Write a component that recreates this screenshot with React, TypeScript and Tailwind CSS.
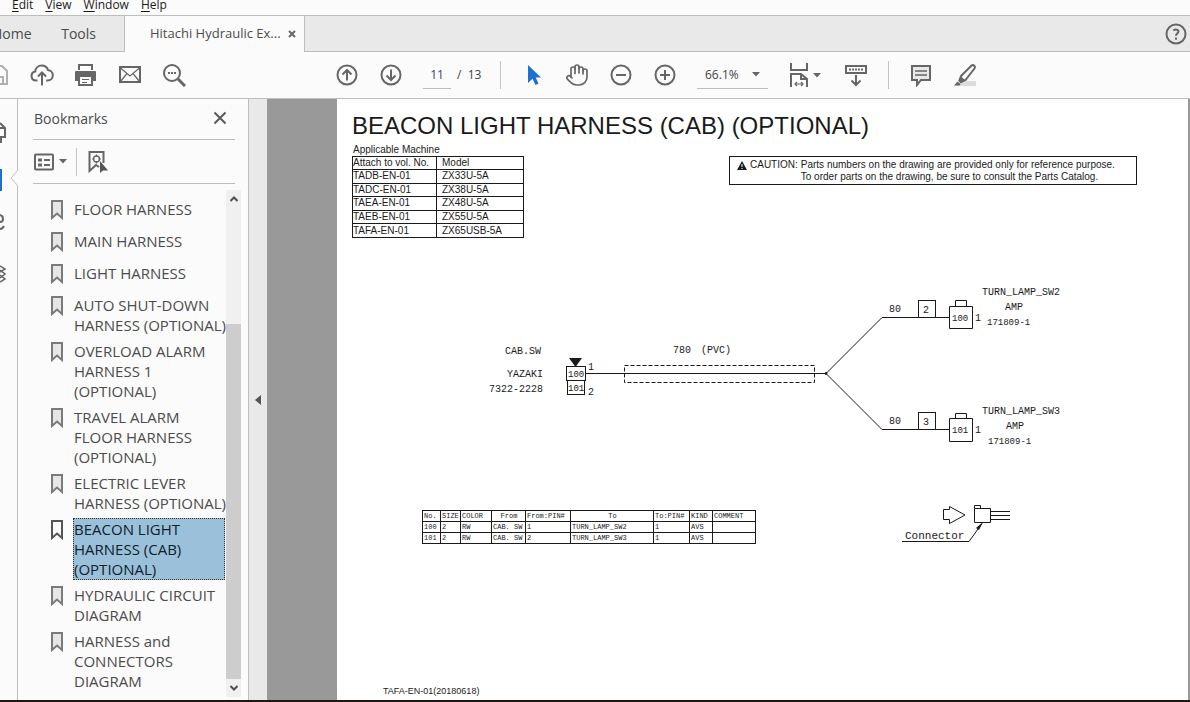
import type { ReactNode } from 'react';
import { Hand } from 'lucide-react';

const menus = ['Edit', 'View', 'Window', 'Help'];

const bookmarks = [
  { title: 'FLOOR HARNESS' },
  { title: 'MAIN HARNESS' },
  { title: 'LIGHT HARNESS' },
  { title: 'AUTO SHUT-DOWN\nHARNESS (OPTIONAL)' },
  { title: 'OVERLOAD ALARM\nHARNESS 1\n(OPTIONAL)' },
  { title: 'TRAVEL ALARM\nFLOOR HARNESS\n(OPTIONAL)' },
  { title: 'ELECTRIC LEVER\nHARNESS (OPTIONAL)' },
  { title: 'BEACON LIGHT\nHARNESS (CAB)\n(OPTIONAL)', active: true },
  { title: 'HYDRAULIC CIRCUIT\nDIAGRAM' },
  { title: 'HARNESS and\nCONNECTORS\nDIAGRAM' },
];

const machines = [
  ['TADB-EN-01', 'ZX33U-5A'],
  ['TADC-EN-01', 'ZX38U-5A'],
  ['TAEA-EN-01', 'ZX48U-5A'],
  ['TAEB-EN-01', 'ZX55U-5A'],
  ['TAFA-EN-01', 'ZX65USB-5A'],
];

const wireColumns = [
  { label: 'No.', className: 'w-[18px] text-left' },
  { label: 'SIZE', className: 'w-[20px] text-left' },
  { label: 'COLOR', className: 'w-[31px] text-left' },
  { label: 'From', className: 'w-[34px] text-center' },
  { label: 'From:PIN#', className: 'w-[45px] text-left' },
  { label: 'To', className: 'w-[83px] text-center' },
  { label: 'To:PIN#', className: 'w-[36px] text-left' },
  { label: 'KIND', className: 'w-[23px] text-left' },
  { label: 'COMMENT', className: 'w-[43px] text-left' },
];

const wires = [
  ['100', '2', 'RW', 'CAB. SW', '1', 'TURN_LAMP_SW2', '1', 'AVS', ''],
  ['101', '2', 'RW', 'CAB. SW', '2', 'TURN_LAMP_SW3', '1', 'AVS', ''],
];

function Icon({ children }: { children: ReactNode }) {
  return (
    <svg viewBox="0 0 24 24" className="w-6 h-6 shrink-0" fill="none" stroke="currentColor" strokeWidth="2">
      {children}
    </svg>
  );
}

function ToolButton({ label, children }: { label: string; children: ReactNode }) {
  return (
    <button aria-label={label} className="w-7 h-7 shrink-0 flex items-center justify-center text-[#666666]">
      {children}
    </button>
  );
}

function Caret() {
  return (
    <svg viewBox="0 0 8 5" className="w-2 h-[5px] shrink-0 pointer-events-none" fill="#666666">
      <path d="M0 0h8L4 4.5z" />
    </svg>
  );
}

function MenuBar() {
  return (
    <nav className="h-[15px] shrink-0 flex items-start gap-3 pl-3 text-[12px] leading-[10px] text-[#1a1a1a]">
      {menus.map((menu) => (
        <button key={menu}>
          <span className="underline underline-offset-2">{menu[0]}</span>
          {menu.slice(1)}
        </button>
      ))}
    </nav>
  );
}

function TabBar() {
  return (
    <div className="h-[37px] shrink-0 flex items-stretch bg-[#e9e9e9] border-t border-[#bdbdbd] text-[#4b4b4b]">
      <div className="w-[124px] shrink-0 flex items-center border-b border-[#bdbdbd] text-[14px]">
        <button className="-ml-2">Home</button>
        <button className="ml-auto mr-7">Tools</button>
      </div>
      <div className="w-[181px] shrink-0 flex items-center border-x border-[#bdbdbd] bg-[#fbfbfb] pl-[25px] pr-2 text-[13px]">
        <button className="whitespace-nowrap">Hitachi Hydraulic Ex...</button>
        <button aria-label="Close tab" className="ml-auto">
          <svg viewBox="0 0 8 8" className="w-2 h-2" stroke="#666666" strokeWidth="2">
            <path d="M1 1l6 6M7 1L1 7" />
          </svg>
        </button>
      </div>
      <div className="flex-1 flex items-center justify-end border-b border-[#bdbdbd] pr-[3px]">
        <button aria-label="Help" className="text-[#666666]">
          <svg viewBox="0 0 22 22" className="w-[22px] h-[22px]" fill="none" stroke="currentColor" strokeWidth="2">
            <circle cx="11" cy="11" r="9.5" />
            <path d="M8.3 7.5c1.8-1.4 5.2-1.2 5.2 1 0 2-2.5 1.8-2.5 4.3M11 14.6v2.2" />
          </svg>
        </button>
      </div>
    </div>
  );
}

function Toolbar() {
  return (
    <div className="h-[47px] shrink-0 flex items-center border-b border-[#bdbdbd]">
      <div className="-ml-4 flex items-center gap-4">
        <ToolButton label="Save">
          <Icon>
            <g stroke="#b0b0b0">
              <path d="M2 3h14l5 5v13H2z" />
              <path d="M6 21v-7h11v7" />
            </g>
          </Icon>
        </ToolButton>
        <ToolButton label="Upload">
          <Icon>
            <path d="M7.5 17.5H6a4.6 4.6 0 0 1-.8-9.1C5.5 5 8.3 2.5 11.7 2.5c3 0 5.3 1.7 6.2 4.4 2.8.3 4.9 2.5 4.9 5.3 0 3-2.3 5.3-5.3 5.3h-1.3" />
            <path d="M12 22.5V10M8 13.5l4-4 4 4" />
          </Icon>
        </ToolButton>
        <ToolButton label="Print">
          <Icon>
            <path d="M5 7V2h13v5" />
            <path d="M2 8h19a1 1 0 0 1 1 1v9H1V9a1 1 0 0 1 1-1z" fill="currentColor" stroke="none" />
            <path d="M5 13v9h13v-9z" fill="#fbfbfb" />
            <path d="M8 16.5h7M8 19.5h5" strokeWidth="1" />
          </Icon>
        </ToolButton>
        <ToolButton label="Email">
          <Icon>
            <rect x="2" y="4" width="20" height="15" />
            <path d="M2.5 5l9.5 8 9.5-8M2.5 18.5l6.5-8M21.5 18.5l-6.5-8" strokeWidth="1.2" />
          </Icon>
        </ToolButton>
        <ToolButton label="Search">
          <Icon>
            <circle cx="10" cy="10" r="8" />
            <path d="M16 16l7 7" strokeWidth="3" />
            <path d="M6 10h8" strokeDasharray="2 1" />
          </Icon>
        </ToolButton>
      </div>

      <div className="ml-[145px] flex items-center gap-4">
        <ToolButton label="Previous page">
          <Icon>
            <circle cx="12" cy="12" r="9.5" />
            <path d="M12 17.5V7M7.5 11.5L12 7l4.5 4.5" />
          </Icon>
        </ToolButton>
        <ToolButton label="Next page">
          <Icon>
            <circle cx="12" cy="12" r="9.5" />
            <path d="M12 6.5V17M7.5 12.5L12 17l4.5-4.5" />
          </Icon>
        </ToolButton>
      </div>

      <div className="ml-[18px] flex items-center gap-[6px] text-[12px] text-[#444444]">
        <input
          aria-label="Page number"
          defaultValue="11"
          className="w-7 h-7 text-center bg-transparent border-b border-[#bdbdbd] outline-none text-[#3a4668]"
        />
        <span className="w-6 whitespace-pre">/&nbsp; 13</span>
      </div>
      <div className="ml-[19px] w-px h-7 bg-[#c4c4c4]" />

      <div className="ml-[18px] flex items-center gap-4">
        <ToolButton label="Select">
          <Icon>
            <path d="M7 2v18l4.5-4.300 3 6.300 3-1.500-2.800-6H20z" fill="#1f6fd0" stroke="none" />
          </Icon>
        </ToolButton>
        <ToolButton label="Pan">
          <Hand className="w-6 h-6" strokeWidth={1.7} />
        </ToolButton>
        <ToolButton label="Zoom out">
          <Icon>
            <circle cx="12" cy="12" r="9.5" />
            <path d="M7 12h10" />
          </Icon>
        </ToolButton>
        <ToolButton label="Zoom in">
          <Icon>
            <circle cx="12" cy="12" r="9.5" />
            <path d="M7 12h10M12 7v10" />
          </Icon>
        </ToolButton>
      </div>

      <div className="ml-[18px] w-[71px] h-7 flex items-center border-b border-[#bdbdbd] pr-2">
        <select aria-label="Zoom" className="w-full pl-2 -mr-2 appearance-none bg-transparent text-[12px] text-[#444444] outline-none">
          <option>66.1%</option>
        </select>
        <Caret />
      </div>

      <button aria-label="Fit width" className="ml-[19px] flex items-center gap-0.5 text-[#666666]">
        <Icon>
          <path d="M4 0v7h16V0" />
          <path d="M4 24V11h10l6 5v8M14 11v5h6" />
          <path d="M8 21h8M10 19l-2 2 2 2M14 19l2 2-2 2" strokeWidth="1.2" />
        </Icon>
        <Caret />
      </button>
      <div className="ml-[21px]">
        <ToolButton label="Scrolling mode">
          <Icon>
            <rect x="2" y="3" width="20" height="7" />
            <path d="M5 6.500h14" strokeDasharray="2 1" />
            <path d="M12 12v10M7.500 17.500L12 22l4.500-4.500" />
          </Icon>
        </ToolButton>
      </div>
      <div className="ml-[18px] w-px h-7 bg-[#c4c4c4]" />
      <div className="ml-[18px] flex items-center gap-4">
        <ToolButton label="Comment">
          <Icon>
            <path d="M3 3h18v14h-9l-4 5v-5H3z" fill="#e8e8e8" />
            <path d="M6 8h12M6 12h12" strokeWidth="1.5" />
          </Icon>
        </ToolButton>
        <ToolButton label="Highlight">
          <Icon>
            <path d="M9 18h14v5H2z" fill="#dcdcdc" stroke="none" />
            <path d="M18.500 2.500c2-1.500 4.500 1 3 3L12.500 17 8 19l-1.500-1.500L8 13z" />
            <path d="M7.500 13l5 4.500-5 2.500-2-2z" fill="currentColor" stroke="none" />
            <path d="M4.500 18.500l3 2.500-1 1.500H1z" fill="currentColor" stroke="none" />
          </Icon>
        </ToolButton>
      </div>
    </div>
  );
}

// Narrow strip of navigation tabs, mostly scrolled off to the left
function NavStrip() {
  return (
    <div className="relative w-[18px] shrink-0 border-r border-[#bdbdbd]">
      <svg viewBox="0 0 18 200" className="w-[18px] h-[200px]" fill="none" stroke="#666666" strokeWidth="2">
        <path d="M0 24l5 5v9H0M0 29h5M1 38v6" />
        <path d="M0 70h2v22H0z" fill="#1f6fd0" stroke="none" />
        <path d="M0 116c4 1 4 7 0 7M0 130c2 0 3-1 4-3" />
        <path d="M0 167l5 3-5 3M0 171l5 4-5 4M0 176l5 4-5 3" strokeWidth="1.5" />
        <path d="M18 71l-7 8 7 8" fill="#fbfbfb" stroke="#bdbdbd" strokeWidth="1" />
      </svg>
      <div className="absolute left-[17px] top-[72px] w-px h-[14px] bg-[#fbfbfb]" />
    </div>
  );
}

function BookmarksPanel() {
  return (
    <aside className="w-[231px] shrink-0 flex flex-col border-r border-[#bdbdbd] text-[#4b4b4b]">
      <div className="ml-[15px] mr-[13px] h-[41px] shrink-0 flex items-center justify-between border-b border-[#bdbdbd] pl-px pr-2 pb-0.5">
        <h2 className="text-[14px]">Bookmarks</h2>
        <button aria-label="Close panel">
          <svg viewBox="0 0 14 14" className="w-[14px] h-[14px]" stroke="#5a5a5a" strokeWidth="2">
            <path d="M1.500 1.500l11 11M12.500 1.500l-11 11" />
          </svg>
        </button>
      </div>
      <div className="ml-[15px] mr-[13px] h-11 shrink-0 flex items-center border-b border-[#bdbdbd]">
        <button aria-label="Options" className="flex items-center gap-[5px]">
          <svg viewBox="0 0 21 18" className="w-[21px] h-[18px]" fill="none" stroke="#666666" strokeWidth="2">
            <rect x="2" y="1.500" width="18" height="15" rx="1" />
            <path d="M5 7h4M5 12h4" strokeWidth="3" />
            <path d="M11 7h6M11 12h6" />
          </svg>
          <Caret />
        </button>
        <div className="ml-[9px] w-px h-7 bg-[#c4c4c4]" />
        <button aria-label="Find current bookmark" className="ml-[9px]">
          <svg viewBox="0 0 24 24" className="w-6 h-6" fill="none" stroke="#666666" strokeWidth="2">
            <path d="M13 17l-3-2-6.500 6V2h14v11" />
            <circle cx="10.500" cy="9" r="3" strokeWidth="1.300" />
            <path d="M10.500 4.500V7M10.500 11v2.500M6 9h2.500M12.500 9H15" strokeWidth="1.200" />
            <path d="M14 11v12l3-2.500h5z" fill="#555555" stroke="none" />
          </svg>
        </button>
      </div>

      <div className="flex-1 min-h-0 flex pt-[6px] pb-[3px]">
        <ul className="flex-1 min-h-0 overflow-hidden pt-2 pl-8 text-[15px] leading-5">
          {bookmarks.map((item) => (
            <li key={item.title} className="min-h-8 pb-1 flex items-start gap-[9px]">
              <svg
                viewBox="0 0 14 20"
                className={item.active ? 'w-[14px] h-5 mt-0.5 shrink-0 text-[#555555]' : 'w-[14px] h-5 mt-0.5 shrink-0 text-[#7a7a7a]'}
                fill={item.active ? 'none' : '#e6e6e6'}
                stroke="currentColor"
                strokeWidth="2"
              >
                <path d="M2 1h10v17l-5-4.500L2 18z" />
              </svg>
              <button
                className={
                  item.active
                    ? 'w-[152px] border border-dotted border-[#333333] bg-[#9ac0da] text-left text-[#10202c] whitespace-pre'
                    : 'w-[152px] border border-transparent text-left whitespace-pre'
                }
              >
                {item.title}
              </button>
            </li>
          ))}
        </ul>
        <div className="w-[15px] mr-[7px] shrink-0 flex flex-col items-center bg-[#f0f0f0]">
          <button aria-label="Scroll up" className="h-[18px]">
            <svg viewBox="0 0 8 6" className="w-2 h-[6px]" fill="none" stroke="#505050" strokeWidth="2">
              <path d="M.500 5L4 1.500 7.500 5" />
            </svg>
          </button>
          <div className="flex-1" />
          <div className="w-full h-[70%] bg-[#cdcdcd]" />
          <button aria-label="Scroll down" className="h-[18px]">
            <svg viewBox="0 0 8 6" className="w-2 h-[6px]" fill="none" stroke="#505050" strokeWidth="2">
              <path d="M.500 1L4 4.500 7.500 1" />
            </svg>
          </button>
        </div>
      </div>
    </aside>
  );
}

function HarnessDiagram() {
  return (
    <svg
      viewBox="337 260 840 200"
      className="block w-[840px] h-[200px] mt-[22px] font-['Liberation_Mono',monospace] text-[10px]"
      fill="none"
      stroke="#1a1a1a"
      strokeWidth="1"
    >
      {/* wires */}
      <path d="M586 373.500H826M882 317.500H949M882 429.500H949" />
      <path d="M826 373.500L882 317.500M826 373.500L882 429.500" />
      <circle cx="826" cy="373.500" r="1" fill="#1a1a1a" />
      <rect x="624.500" y="365.500" width="190" height="17" strokeDasharray="4 2" />

      {/* connectors */}
      <path d="M569 358h13l-6.500 9z" fill="#1a1a1a" stroke="none" />
      <rect x="566.500" y="366.500" width="19" height="14" />
      <rect x="567.500" y="380.500" width="17" height="14" />
      <rect x="918.500" y="300.500" width="17" height="17" />
      <rect x="918.500" y="412.500" width="17" height="17" />
      <path d="M949.500 306.500h23v22h-23zM955.500 306.500v-6h11v6" />
      <path d="M949.500 418.500h23v23h-23zM955.500 418.500v-5h11v5" />

      <g fill="#1a1a1a" stroke="none">
        <text x="505" y="354">CAB.SW</text>
        <text x="507" y="377">YAZAKI</text>
        <text x="489" y="392">7322-2228</text>
        <text x="588" y="370">1</text>
        <text x="588" y="395">2</text>
        <text x="673" y="353">780</text>
        <text x="701" y="353">(PVC)</text>
        <text x="889" y="312">80</text>
        <text x="889" y="424">80</text>
        <text x="923" y="313">2</text>
        <text x="923" y="425">3</text>
        <text x="975" y="321">1</text>
        <text x="975" y="433">1</text>
        <text x="982" y="295">TURN_LAMP_SW2</text>
        <text x="1005" y="310">AMP</text>
        <text x="982" y="414">TURN_LAMP_SW3</text>
        <text x="1006" y="429">AMP</text>
        <g className="text-[9px]">
          <text x="568" y="377">100</text>
          <text x="568" y="391">101</text>
          <text x="952" y="321">100</text>
          <text x="952" y="433">101</text>
          <text x="987" y="325">171809-1</text>
          <text x="988" y="444">171809-1</text>
        </g>
      </g>
    </svg>
  );
}

function ConnectorLegend() {
  return (
    <svg
      viewBox="895 500 120 45"
      className="w-[120px] h-[45px] font-['Liberation_Mono',monospace] text-[11px]"
      fill="none"
      stroke="#1a1a1a"
      strokeWidth="1"
    >
      <path d="M943.500 509.500h6v-3l15.500 8.500-15.500 8.500v-4h-6z" />
      <path d="M974.500 508.500h16v14h-16zM974.500 508.500v-3h6v3M991 511.500h19M991 515.500h19M991 519.500h19" />
      <path d="M902 541.500h67l13-18" />
      <path d="M983 522l-7 6 3 2z" fill="#1a1a1a" stroke="none" />
      <text x="905" y="539" fill="#1a1a1a" stroke="none">Connector</text>
    </svg>
  );
}

function DocumentPage() {
  return (
    <main className="flex-1 min-w-0 mr-0.5 flex flex-col bg-white overflow-hidden pt-[13px] pb-[3px] text-[10px] leading-3 text-[#1a1a1a] font-['Liberation_Sans',Arial,sans-serif]">
      <h1 className="pl-[15px] text-[24px] leading-7 whitespace-nowrap">BEACON LIGHT HARNESS (CAB) (OPTIONAL)</h1>
      <div className="mt-1 pl-[15px] pr-[51px] flex items-start justify-between">
        <table className="w-[172px] h-[82px] border-collapse table-fixed">
          <caption className="h-3 text-left pl-px">Applicable Machine</caption>
          <thead>
            <tr>
              <th className="w-[84px] border border-[#1a1a1a] p-0 text-left font-normal whitespace-nowrap">Attach to vol. No.</th>
              <th className="border border-[#1a1a1a] p-0 pl-[5px] text-left font-normal">Model</th>
            </tr>
          </thead>
          <tbody>
            {machines.map(([volume, model]) => (
              <tr key={volume}>
                <td className="border border-[#1a1a1a] p-0">{volume}</td>
                <td className="border border-[#1a1a1a] p-0 pl-[5px]">{model}</td>
              </tr>
            ))}
          </tbody>
        </table>

        <div className="mt-3 w-[408px] h-[29px] flex items-start border border-[#1a1a1a] pl-[7px] pt-0.5 whitespace-nowrap">
          <svg viewBox="0 0 10 9" className="w-[10px] h-[9px] mt-0.5 mr-[3px]">
            <path d="M5 0l5 9H0z" fill="#1a1a1a" />
            <path d="M5 3v3M5 7v1" stroke="#ffffff" />
          </svg>
          <span className="mr-[3px]">CAUTION:</span>
          <p>
            Parts numbers on the drawing are provided only for reference purpose.
            <br />
            To order parts on the drawing, be sure to consult the Parts Catalog.
          </p>
        </div>
      </div>

      <HarnessDiagram />

      <div className="mt-10 pl-[85px] flex items-start gap-[139px]">
        <table className="mt-[10px] w-[334px] border-collapse table-fixed font-['Liberation_Mono',monospace] text-[7px] leading-[10px]">
          <thead>
            <tr className="h-[11px]">
              {wireColumns.map((column) => (
                <th key={column.label} className={`${column.className} border border-[#1a1a1a] p-0 pl-px font-normal whitespace-nowrap`}>
                  {column.label}
                </th>
              ))}
            </tr>
          </thead>
          <tbody>
            {wires.map((wire) => (
              <tr key={wire[0]} className="h-[11px]">
                {wire.map((value, index) => (
                  <td key={index} className="border border-[#1a1a1a] p-0 pl-px whitespace-nowrap">{value}</td>
                ))}
              </tr>
            ))}
          </tbody>
        </table>
        <ConnectorLegend />
      </div>

      <footer className="mt-auto pl-[46px] text-[9px]">TAFA-EN-01(20180618)</footer>
    </main>
  );
}

export default function App() {
  return (
    <div className="h-screen flex flex-col overflow-hidden bg-[#fbfbfb] font-['Open_Sans','Noto_Sans',sans-serif]">
      <MenuBar />
      <TabBar />
      <Toolbar />
      <div className="flex-1 min-h-0 flex">
        <NavStrip />
        <BookmarksPanel />
        <button aria-label="Collapse panel" className="w-[18px] shrink-0 flex items-center justify-center bg-[#e9e9e9]">
          <svg viewBox="0 0 6 10" className="w-[6px] h-[10px]" fill="#555555">
            <path d="M6 0v10L0 5z" />
          </svg>
        </button>
        <div className="flex-1 min-w-0 flex bg-[#999999] pl-[70px]">
          <DocumentPage />
        </div>
      </div>
      <div className="h-0.5 shrink-0 bg-[#1c1714]" />
    </div>
  );
}
